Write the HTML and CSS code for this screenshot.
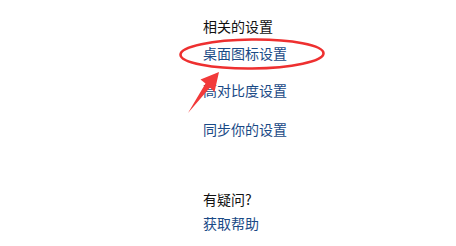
FILE: index.html
```html
<!DOCTYPE html>
<html lang="zh-CN">
<head>
<meta charset="utf-8">
<title>相关的设置</title>
<link rel="stylesheet" href="styles.css">
</head>
<body>
<div class="page">
  <section class="group">
    <h2 class="title">相关的设置</h2>
    <a class="link first" href="#">桌面图标设置</a>
    <a class="link second" href="#">高对比度设置</a>
    <a class="link third" href="#">同步你的设置</a>
  </section>
  <section class="group help">
    <h2 class="title">有疑问?</h2>
    <a class="link tight" href="#">获取帮助</a>
  </section>
  <svg class="annot" width="456" height="246" viewBox="0 0 456 246" aria-hidden="true">
    <ellipse cx="252" cy="54" rx="71.5" ry="14.5" fill="none" stroke="#ee3030" stroke-width="2.6" transform="rotate(-0.6 252 54)"/>
    <polygon points="219,72 214.5,92 210,87.5 188,113 205.5,83.5 200.5,79.5" fill="#f23a3a"/>
  </svg>
</div>
</body>
</html>
```
FILE: styles.css
```css
html, body {
  margin: 0;
  padding: 0;
  background: #ffffff;
}
.page {
  position: relative;
  width: 456px;
  height: 246px;
  overflow: hidden;
  box-sizing: border-box;
  padding: 16px 0 0 203px;
  font-family: "Noto Sans CJK SC", "Microsoft YaHei", sans-serif;
  font-size: 14px;
  line-height: 20px;
}
.group {
  display: flex;
  flex-direction: column;
  align-items: flex-start;
}
.title {
  margin: 0;
  font-size: 14px;
  font-weight: normal;
  color: #111111;
  line-height: 20px;
}
.link {
  color: #1a4a86;
  text-decoration: none;
  line-height: 20px;
}
.link.first {
  margin-top: 7px;
}
.link.second {
  margin-top: 17px;
}
.link.third {
  margin-top: 19px;
}
.link.tight {
  margin-top: 4px;
}
.help {
  margin-top: 50px;
}
.annot {
  position: absolute;
  left: 0;
  top: 0;
  pointer-events: none;
}
```
